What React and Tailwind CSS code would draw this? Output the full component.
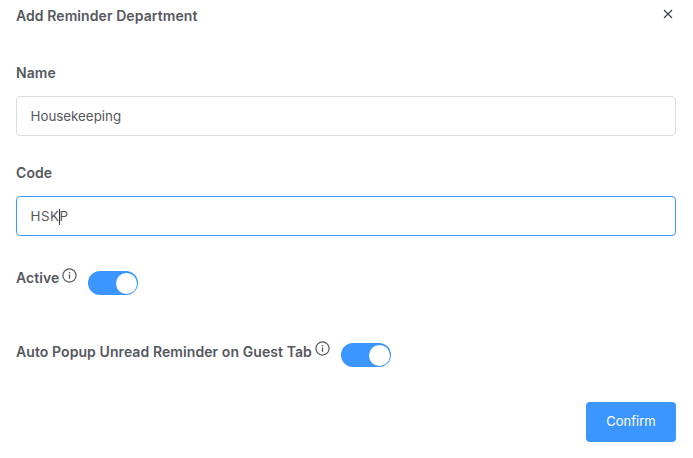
const InfoIcon = () => (
  <svg width="15" height="15" viewBox="0 0 15 15" fill="none" className="shrink-0">
    <circle cx="7.5" cy="7.5" r="6.6" stroke="#55585e" strokeWidth="1.2" />
    <rect x="6.85" y="6.4" width="1.3" height="4.4" fill="#55585e" />
    <rect x="6.85" y="4" width="1.3" height="1.4" fill="#55585e" />
  </svg>
);

const Toggle = () => (
  <div className="flex h-6 w-[50px] shrink-0 items-center justify-end rounded-full bg-[#3b96ff] pr-px">
    <div className="h-[21px] w-[21px] rounded-full bg-white" />
  </div>
);

const App = () => {
  return (
    <div className="h-[458px] w-[693px] overflow-hidden bg-white px-4 font-['Inter',sans-serif] text-[#55585e]">
      <div className="flex h-8 items-center justify-between">
        <h1 className="mb-[2px] text-[14px] tracking-[0.08px] font-semibold">Add Reminder Department</h1>
        <svg width="10" height="10" viewBox="0 0 10 10" className="mr-[4px] mb-[4px]">
          <path d="M1 1L9 9M9 1L1 9" stroke="#2c3e50" strokeWidth="1.1" />
        </svg>
      </div>

      <label className="mt-[32px] block text-[14px] leading-[18px] tracking-[0.08px] font-semibold">Name</label>
      <div className="mt-[14px] flex h-10 w-[660px] items-center rounded border border-[#d8dde6] px-[13.5px] pt-px text-[13.33px]">
        Housekeeping
      </div>

      <label className="mt-[28px] block text-[14px] leading-[18px] tracking-[0.08px] font-semibold">Code</label>
      <div className="mt-[14px] flex h-10 w-[660px] items-center rounded border border-[#3b96ff] px-[13.5px] pt-px text-[13.33px] tracking-[0.5px]">
        HSK
        <span className="mx-[-0.5px] h-4 w-px bg-[#333]" />
        P
      </div>

      <div className="mt-[35px] flex h-6 items-center">
        <div className="mb-[11px] flex items-center">
          <span className="text-[14px] tracking-[0.08px] font-semibold">Active</span>
          <span className="mb-[4px] ml-[3px]"><InfoIcon /></span>
        </div>
        <span className="ml-[10.5px]"><Toggle /></span>
      </div>

      <div className="mt-[48px] flex h-6 items-center">
        <div className="mb-2 flex items-center">
          <span className="text-[14px] tracking-[0.08px] font-semibold">Auto Popup Unread Reminder on Guest Tab</span>
          <span className="mb-[5px] ml-[3px]"><InfoIcon /></span>
        </div>
        <span className="ml-[11px]"><Toggle /></span>
      </div>

      <div className="mt-[35px] flex w-[660px] justify-end">
        <button className="h-10 w-[90px] rounded bg-[#3b96ff] text-[13px] text-white">Confirm</button>
      </div>
    </div>
  );
};

export default App;
